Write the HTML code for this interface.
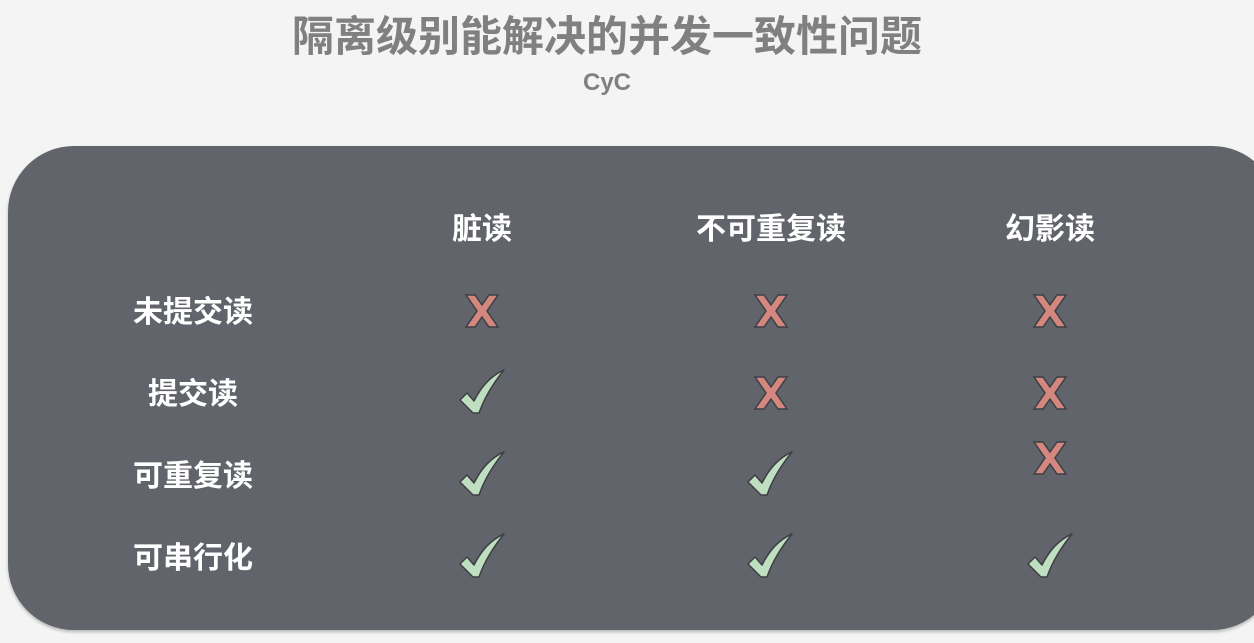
<!DOCTYPE html>
<html><head><meta charset="utf-8"><style>
body{margin:0;width:1254px;height:643px;background:#f4f4f4;overflow:hidden;position:relative;font-family:"Liberation Sans","Noto Sans CJK SC",sans-serif;}
.t{position:absolute;left:0;width:1214px;text-align:center;color:#808080;font-weight:bold}
.box{position:absolute;left:8px;top:146px;width:1270px;height:484px;background:#62646b;border-radius:66px;box-shadow:0 2px 3px rgba(0,0,0,.25)}
.l{position:absolute;color:#fff;font-weight:bold;font-size:30px;transform:translate(-50%,-50%);white-space:nowrap}
svg{position:absolute}
</style></head><body>
<div class="t" style="top:3px;font-size:42px;left:0;width:1214px">隔离级别能解决的并发一致性问题</div>
<div class="t" style="top:69px;font-size:24px">CyC</div>
<div class="box"></div>
<div class="l" style="left:482px;top:226px">脏读</div>
<div class="l" style="left:771px;top:226px">不可重复读</div>
<div class="l" style="left:1050px;top:226px">幻影读</div>
<div class="l" style="left:193px;top:309px">未提交读</div>
<div class="l" style="left:193px;top:391px">提交读</div>
<div class="l" style="left:193px;top:473px">可重复读</div>
<div class="l" style="left:193px;top:555px">可串行化</div>
<svg width="0" height="0"><defs>
<g id="x"><path d="M2 2h9l7 10 7-10h9l-11 16 11 16h-9l-7-10-7 10H2l11-16z" fill="#d4877e" stroke="#3d3f45" stroke-width="1.5"/></g>
<g id="c"><path d="M1 31l7-7 7 8C22 18 31 7 45 1c-9 11-19 26-25 43h-6z" fill="#bfe0c0" stroke="#3d3f45" stroke-width="1.5" stroke-linejoin="round"/></g>
</defs></svg>
<svg style="left:464px;top:293px" width="38" height="38"><use href="#x"/></svg>
<svg style="left:753px;top:293px" width="38" height="38"><use href="#x"/></svg>
<svg style="left:1032px;top:293px" width="38" height="38"><use href="#x"/></svg>
<svg style="left:753px;top:375px" width="38" height="38"><use href="#x"/></svg>
<svg style="left:1032px;top:375px" width="38" height="38"><use href="#x"/></svg>
<svg style="left:1032px;top:440px" width="38" height="38"><use href="#x"/></svg>
<svg style="left:459px;top:369px" width="48" height="46"><use href="#c"/></svg>
<svg style="left:459px;top:451px" width="48" height="46"><use href="#c"/></svg>
<svg style="left:459px;top:533px" width="48" height="46"><use href="#c"/></svg>
<svg style="left:747px;top:451px" width="48" height="46"><use href="#c"/></svg>
<svg style="left:747px;top:533px" width="48" height="46"><use href="#c"/></svg>
<svg style="left:1027px;top:533px" width="48" height="46"><use href="#c"/></svg>
</body></html>
